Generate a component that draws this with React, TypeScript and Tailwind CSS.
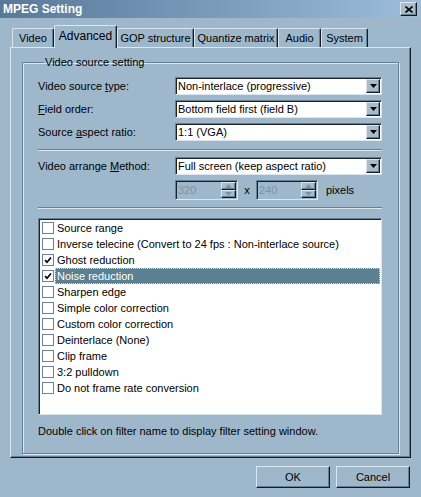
import React from "react"

const tabs = ["Video", "Advanced", "GOP structure", "Quantize matrix", "Audio", "System"]
const tabWidths: Record<string, string> = {
  Video: "w-[42px]",
  Advanced: "w-[63px]",
  "GOP structure": "w-[77px]",
  "Quantize matrix": "w-[84px]",
  Audio: "w-[43px]",
  System: "w-[47px]",
}

const filters = [
  { name: "Source range", on: false },
  { name: "Inverse telecine (Convert to 24 fps : Non-interlace source)", on: false },
  { name: "Ghost reduction", on: true },
  { name: "Noise reduction", on: true, selected: true },
  { name: "Sharpen edge", on: false },
  { name: "Simple color correction", on: false },
  { name: "Custom color correction", on: false },
  { name: "Deinterlace (None)", on: false },
  { name: "Clip frame", on: false },
  { name: "3:2 pulldown", on: false },
  { name: "Do not frame rate conversion", on: false },
]

const sunken =
  "border border-t-[#667f93] border-l-[#667f93] border-r-[#dbe6ef] border-b-[#dbe6ef] shadow-[inset_1px_1px_0_#1a2228]"
const raised =
  "border border-t-[#dbe6ef] border-l-[#dbe6ef] border-r-[#141c22] border-b-[#141c22] shadow-[inset_-1px_-1px_0_#667f93]"

function Arrow({ up, color = "#000" }: { up?: boolean; color?: string }) {
  return (
    <svg width="7" height="4" viewBox="0 0 7 4">
      <path d={up ? "M0 4 L3.5 0 L7 4 Z" : "M0 0 L7 0 L3.5 4 Z"} fill={color} />
    </svg>
  )
}

function Combo({ value }: { value: string }) {
  return (
    <div className={`${sunken} bg-white h-[18px] flex items-center`}>
      <span className="flex-1 pl-[2px] leading-none">{value}</span>
      <div className={`${raised} bg-[#a9bccb] w-[14px] h-[14px] mr-[1px] flex items-center justify-center`}>
        <Arrow />
      </div>
    </div>
  )
}

function Spin({ value }: { value: string }) {
  return (
    <div className={`${sunken} bg-[#9fb7cb] h-[20px] flex items-center`}>
      <span className="flex-1 pl-[2px] text-[#7d93a6] leading-none">{value}</span>
      <div className="w-[15px] h-[16px] mr-[1px] flex flex-col">
        <div className={`${raised} bg-[#a9bccb] flex-1 flex items-center justify-center`}>
          <Arrow up color="#7d93a6" />
        </div>
        <div className={`${raised} bg-[#a9bccb] flex-1 flex items-center justify-center`}>
          <Arrow color="#7d93a6" />
        </div>
      </div>
    </div>
  )
}

function Separator() {
  return <div className="h-[2px] border-t border-t-[#667f93] border-b border-b-[#dbe6ef]" />
}

export default function App() {
  return (
    <div className="w-[421px] h-[497px] bg-[#9fb7cb] font-['Liberation_Sans',Arial,sans-serif] text-[11px] text-black flex flex-col overflow-hidden">
      {/* caption */}
      <div className="h-[18px] bg-gradient-to-r from-[#58799a] to-[#9dbddb] flex items-center justify-between pl-[3px]">
        <span className="text-white font-bold text-[12px] leading-none">MPEG Setting</span>
        <div className={`${raised} bg-[#a9bccb] w-[17px] h-[14px] mr-[4px] flex items-center justify-center`}>
          <svg width="8" height="7" viewBox="0 0 8 7">
            <path d="M0.5 0.5 L7.5 6.5 M7.5 0.5 L0.5 6.5" stroke="#000" strokeWidth="1.6" />
          </svg>
        </div>
      </div>

      {/* tab strip */}
      <div className="pl-[12px] pt-[7px] flex items-end h-[29px]">
        {tabs.map(t => {
          const active = t === "Advanced"
          return (
            <div
              key={t}
              className={`${tabWidths[t]} ${
                active ? "h-[23px] relative z-10 -mb-[1px] bg-[#9fb7cb]" : "h-[19px]"
              } border-t border-l border-t-[#dbe6ef] border-l-[#dbe6ef] border-r border-r-[#141c22] rounded-t-[2px] shadow-[inset_-1px_0_0_#667f93] flex items-center justify-center leading-none ${
                active ? "pb-[3px] text-[12px]" : "pt-[1px]"
              }`}
            >
              {t}
            </div>
          )
        })}
      </div>

      {/* tab page */}
      <div className="ml-[10px] w-[401px] h-[411px] border border-t-[#dbe6ef] border-l-[#dbe6ef] border-r-[#141c22] border-b-[#141c22] shadow-[inset_-1px_-1px_0_#667f93] pl-[11px] pt-[8px]">
        <fieldset className="w-[377px] border border-[#667f93] shadow-[inset_1px_1px_0_#dbe6ef,1px_1px_0_#dbe6ef] pl-[15px] pr-[16px] pt-[8px] pb-[15px]">
          <legend className="ml-[6px] px-[1px] leading-[13px]">Video source setting</legend>

          <div className="grid grid-cols-[137px_207px] gap-y-[5px] items-center">
            <span>
              Video source <span className="underline">t</span>ype:
            </span>
            <Combo value="Non-interlace (progressive)" />
            <span>
              <span className="underline">F</span>ield order:
            </span>
            <Combo value="Bottom field first (field B)" />
            <span>
              Source <span className="underline">a</span>spect ratio:
            </span>
            <Combo value="1:1 (VGA)" />
          </div>

          <div className="mt-[8px]">
            <Separator />
          </div>

          <div className="mt-[6px] grid grid-cols-[137px_207px] items-center">
            <span>
              Video arrange <span className="underline">M</span>ethod:
            </span>
            <Combo value="Full screen (keep aspect ratio)" />
          </div>

          <div className="mt-[5px] ml-[137px] flex items-center">
            <div className="w-[63px]">
              <Spin value="320" />
            </div>
            <span className="w-[18px] text-center">x</span>
            <div className="w-[62px]">
              <Spin value="240" />
            </div>
            <span className="ml-[8px]">pixels</span>
          </div>

          <div className="mt-[7px]">
            <Separator />
          </div>

          {/* filter list */}
          <div className={`${sunken} mt-[9px] h-[197px] bg-white pt-[1px] pr-[1px]`}>
            {filters.map(f => (
              <div key={f.name} className="h-[16px] flex items-center">
                <div className="ml-[3px] w-[12px] h-[12px] border border-[#6d8294] bg-white flex items-center justify-center">
                  {f.on && (
                    <svg width="8" height="8" viewBox="0 0 8 8">
                      <path d="M1 4 L3 6.2 L7 1.5" stroke="#000" strokeWidth="1.7" fill="none" />
                    </svg>
                  )}
                </div>
                <span
                  className={`ml-[1px] flex-1 h-[16px] pl-[2px] flex items-center leading-none ${
                    f.selected ? "bg-[#5a8092] text-white outline-1 outline-dotted outline-[#c9d6df] -outline-offset-1" : ""
                  }`}
                >
                  {f.name}
                </span>
              </div>
            ))}
          </div>

          <div className="mt-[10px] leading-[13px]">Double click on filter name to display filter setting window.</div>
        </fieldset>
      </div>

      {/* dialog buttons */}
      <div className="mt-[8px] pr-[11px] flex justify-end gap-[6px]">
        <button className={`${raised} bg-[#9fb7cb] w-[74px] h-[22px] leading-none`}>OK</button>
        <button className={`${raised} bg-[#9fb7cb] w-[74px] h-[22px] leading-none`}>Cancel</button>
      </div>
    </div>
  )
}
